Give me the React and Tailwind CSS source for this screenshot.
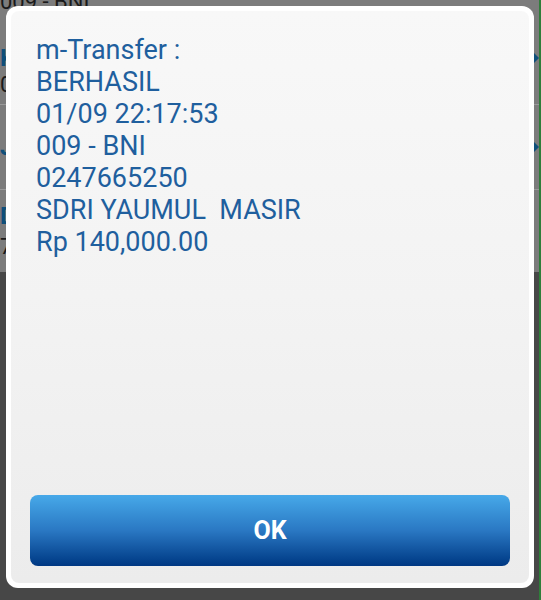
// Transfer result dialog over a dimmed list
import React from 'react';

const LINES = [
  'm-Transfer :',
  'BERHASIL',
  '01/09 22:17:53',
  '009 - BNI',
  '0247665250',
  'SDRI YAUMUL  MASIR',
  'Rp 140,000.00',
];

const Arrow = () => (
  <svg width="8" height="16" viewBox="0 0 8 16" className="ml-auto">
    <path d="M0 0 L8 8 L0 16 Z" fill="#0f4f7a" />
  </svg>
);

const App = () => {
  return (
    <div
      className="relative w-[541px] h-[600px] overflow-hidden flex flex-col"
      style={{ fontFamily: 'Roboto, "Liberation Sans", Arial, sans-serif' }}
    >
      {/* dimmed list behind the dialog */}
      <div className="h-[272px] bg-[#7c7c7c] flex flex-col border-r-2 border-[#2f7d3a]">
        <div className="h-[105px] flex flex-col border-b border-[#9a9a9a] relative">
          <div className="text-[22px] leading-none text-[#1a1a1a] -mt-[9px]">009 - BNI</div>
          <div className="flex items-center mt-[33px]">
            <span className="text-[24px] leading-none text-[#0f4f7a] font-bold">K</span>
            <Arrow />
          </div>
          <div className="text-[22px] leading-none text-[#1a1a1a] mt-[4px]">0</div>
        </div>
        <div className="h-[85px] flex items-center border-b border-[#9a9a9a]">
          <span className="text-[24px] leading-none text-[#0f4f7a] font-bold">J</span>
          <Arrow />
        </div>
        <div className="flex-1 flex flex-col pt-[14px]">
          <span className="text-[24px] leading-none text-[#0f4f7a] font-bold">D</span>
          <span className="text-[22px] leading-none text-[#1a1a1a] mt-[8px]">7</span>
        </div>
      </div>
      <div className="flex-1 bg-[#474747] border-r-2 border-[#2f7d3a]" />

      {/* dialog */}
      <div className="absolute left-[6px] top-[6px] w-[528px] h-[582px] rounded-[12px] bg-white p-[5px]">
        <div className="h-full rounded-[8px] bg-gradient-to-b from-[#f8f8f8] via-[#f3f3f3] to-[#ececec] flex flex-col">
          <div className="pl-[25px] pt-[23px] text-[27px] leading-[32px] text-[#1f5f9e] whitespace-pre">
            {LINES.map((line) => (
              <div key={line}>{line}</div>
            ))}
          </div>
          <div className="flex-1" />
          <button className="mx-[19px] mb-[17px] h-[71px] rounded-[8px] bg-gradient-to-b from-[#47a9e9] via-[#2a78c3] to-[#003883] text-white text-[25px] font-bold">
            OK
          </button>
        </div>
      </div>
    </div>
  );
};

export default App;
